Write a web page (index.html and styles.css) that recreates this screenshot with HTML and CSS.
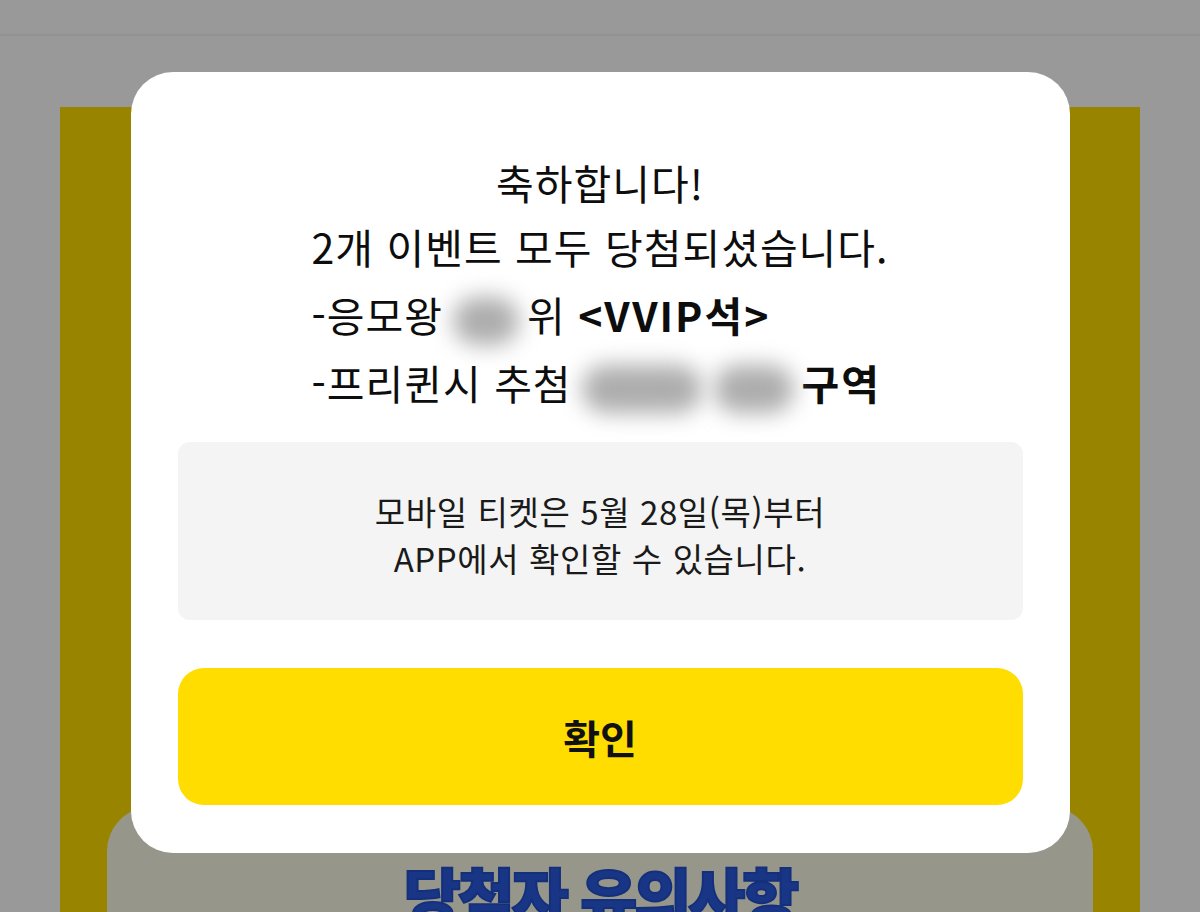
FILE: index.html
```html
<!DOCTYPE html>
<html lang="ko">
<head>
<meta charset="utf-8">
<title>당첨 안내</title>
<link rel="stylesheet" href="styles.css">
</head>
<body>
<div class="page">
  <header class="topbar"></header>
  <main class="event">
    <section class="notice-panel">
      <h2 class="notice-title">당첨자 유의사항</h2>
    </section>
  </main>
</div>
<div class="dim">
  <div class="modal">
    <div class="msg">
      <p class="msg-head">축하합니다!</p>
      <p>2개 이벤트 모두 당첨되셨습니다.</p>
      <p>-응모왕<span class="blur blur-a"></span>위 <b>&lt;VVIP석&gt;</b></p>
      <p>-프리퀸시 추첨<span class="blur blur-b"></span><span class="blur blur-c"></span><b>구역</b></p>
    </div>
    <div class="info">
      <p>모바일 티켓은 5월 28일(목)부터</p>
      <p>APP에서 확인할 수 있습니다.</p>
    </div>
    <button class="ok">확인</button>
  </div>
</div>
</body>
</html>
```
FILE: styles.css
```css
* { box-sizing: border-box; }
html, body { margin: 0; height: 100%; }
body {
  background: #ffffff;
  font-family: "Noto Sans CJK KR", "Noto Sans", sans-serif;
  overflow: hidden;
}
.page {
  height: 912px;
  display: flex;
  flex-direction: column;
  overflow: hidden;
}
.topbar {
  flex: 0 0 auto;
  height: 36px;
  border-bottom: 2px solid #f3f3f3;
  background: #ffffff;
}
.event {
  flex: 1 1 auto;
  min-height: 0;
  overflow: hidden;
  margin: 71px 60px 0;
  background: #ffdd00;
  padding: 700px 47px 0;
}
.notice-panel {
  height: 300px;
  background: #fcfae6;
  border-radius: 44px;
  padding-top: 56px;
  text-align: center;
}
.notice-title {
  margin: 0;
  font-size: 62px;
  line-height: 1;
  font-weight: 900;
  color: #2a5ae0;
  letter-spacing: -3px;
  -webkit-text-stroke: 2px #2350cc;
}
.dim {
  position: fixed;
  inset: 0;
  background: rgba(0, 0, 0, 0.4);
  display: flex;
  justify-content: center;
  align-items: flex-start;
  padding-top: 72px;
}
.modal {
  width: 939px;
  height: 781px;
  background: #ffffff;
  border-radius: 42px;
  padding: 76px 47px 48px;
  display: flex;
  flex-direction: column;
}
.msg {
  width: fit-content;
  margin: 0 auto;
  font-size: 41px;
  line-height: 68px;
  letter-spacing: 1px;
  color: #0d0d0d;
}
.msg p { margin: 0; white-space: nowrap; }
.msg .msg-head { text-align: center; margin-bottom: -4px; }
.msg b { font-weight: 700; letter-spacing: 2px; }
.blur {
  display: inline-block;
  vertical-align: middle;
  height: 48px;
  background: #adadad;
  border-radius: 24px;
  filter: blur(11px);
}
.blur-a { width: 66px; margin: 0 8px 0 10px; }
.blur-b { width: 120px; margin: 0 0 0 10px; }
.blur-c { width: 80px; margin: 0 8px 0 12px; }
.info {
  margin-top: 26px;
  height: 178px;
  background: #f4f4f4;
  border-radius: 12px;
  display: flex;
  flex-direction: column;
  justify-content: center;
  align-items: center;
  padding-top: 8px;
  font-size: 33px;
  line-height: 47px;
  letter-spacing: 0.6px;
  color: #1a1a1a;
}
.info p { margin: 0; }
.ok {
  margin-top: 48px;
  height: 137px;
  border: 0;
  border-radius: 26px;
  background: #ffdd00;
  font-family: inherit;
  font-size: 40px;
  font-weight: 700;
  color: #111111;
}
```
